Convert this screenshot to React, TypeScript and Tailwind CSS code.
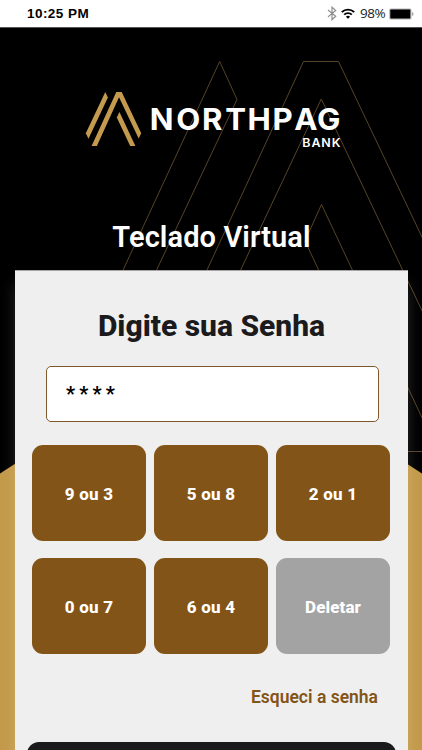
const keys = ["9 ou 3", "5 ou 8", "2 ou 1", "0 ou 7", "6 ou 4"];

function StatusBar() {
    return (
        <header className="flex h-[27px] items-center justify-between bg-white pl-[27px] pr-[8px]">
            <span className="pt-px font-['Liberation_Sans',sans-serif] text-[13.500px] font-bold tracking-[0.450px] text-black">
                10:25 PM
            </span>
            <div className="flex items-center">
                <svg className="h-[15px] w-[10px]" viewBox="0 0 10 15" fill="none" stroke="#8c8c8c" strokeWidth="1.200">
                    <path d="M1 4 8.7 10.3 5 13.7V1.2L8.7 4.4 1 10.9" />
                </svg>
                <svg className="ml-[4px] h-[11px] w-[14px]" viewBox="0 0 14 11" fill="none" stroke="#000" strokeWidth="1.9">
                    <path d="M.8 4.2a8.8 8.8 0 0 1 12.4 0" />
                    <path d="M3.2 6.7a5.4 5.4 0 0 1 7.6 0" />
                    <path d="M7 10.8 4.9 8.7a3 3 0 0 1 4.2 0z" fill="#000" stroke="none" />
                </svg>
                <span className="ml-[5px] w-[27px] font-['Open_Sans',sans-serif] text-[13.500px] leading-none tracking-[-0.500px] text-[#222]">
                    98%
                </span>
                <svg className="ml-[2px] h-[12px] w-[25px]" viewBox="0 0 25 12">
                    <rect x=".2" y=".5" width="22.3" height="11" rx="1.5" fill="#b5b5b5" />
                    <rect x="1.3" y="1.5" width="20" height="9" rx=".7" fill="#000" />
                    <path d="M23.100 4v4q1.400-.5 1.400-2t-1.400-2z" fill="#999" />
                </svg>
            </div>
        </header>
    );
}

function Backdrop() {
    return (
        <svg className="absolute inset-0 h-full w-full" viewBox="0 27.500 422 722">
            <circle cx="211" cy="783" r="375" fill="#c39a4a" />
            <g fill="none" stroke="#5f4c2c" strokeWidth="0.9">
                <path d="M39 451 219.7 61 237 99 71 451z" />
                <path d="M123 451 303.5 61h35L524 451h-35L321.3 98.500 155 451z" />
                <path d="M321.500 204 305 240.500 404 451h34z" />
            </g>
        </svg>
    );
}

function Logo() {
    return (
        <svg className="mx-auto block h-[60px] w-[262px]" viewBox="82 90 262 60">
            <g fill="#c39a4e">
                <path d="M105.300 92 107.900 97.600 88.500 138.700 85.800 133.200z" />
                <path d="M116.300 92h5.400L141.200 133.300l-2.500 5.300L119 97.300 96.900 146H91.600z" />
                <path d="M119.500 112 135.400 146h-5.200L116.800 117.500z" />
            </g>
            <g fill="#fff" fontFamily="Inter, sans-serif">
                <text
                    transform="scale(1.04 1)"
                    x="144 169.500 194.300 216.600 238 262 283 304.800"
                    y="129.600"
                    fontSize="30"
                    fontWeight="700"
                >
                    NORTHPAG
                </text>
                <text x="302.300" y="146.500" fontSize="11.500" fontWeight="600" textLength="39" lengthAdjust="spacingAndGlyphs" letterSpacing=".8">
                    BANK
                </text>
            </g>
        </svg>
    );
}

export default function App() {
    return (
        <div className="flex h-[750px] w-[422px] flex-col overflow-hidden bg-black font-['Roboto',sans-serif]">
            <StatusBar />

            <main className="relative min-h-0 flex-1 overflow-hidden border-t border-[#555]">
                <Backdrop />

                <div className="relative pl-[4px] pt-[62px]">
                    <Logo />
                </div>
                <h1 className="relative mt-[69px] pl-px text-center text-[29px] font-semibold leading-[36px] tracking-[0.100px] text-white">
                    Teclado Virtual
                </h1>

                {/* Password card */}
                <section className="relative ml-[15px] mt-[15px] h-[520px] w-[393px] border-t border-[#a5a5a5] bg-[#efefef] pt-[35px] shadow-[0_14px_14px_rgba(255,255,255,0.15)]">
                    <h2 className="text-center text-[30px] font-extrabold leading-[40px] text-[#1b1a1c]">
                        Digite sua Senha
                    </h2>
                    <div className="ml-[31px] mt-[19.500px] flex h-[56px] w-[333px] items-center rounded-[5px] border border-[#80592a] bg-white pl-[19px] text-[20px] font-bold tracking-[4.200px] text-black">
                        ****
                    </div>

                    <div className="ml-[17px] mt-[23px] grid w-[358px] grid-cols-3 gap-x-[8px] gap-y-[17px]">
                        {keys.map((label) => (
                            <button
                                key={label}
                                className="h-[96px] rounded-[11px] bg-[#835417] pt-[4px] text-[17px] font-extrabold tracking-[0.200px] text-white"
                            >
                                {label}
                            </button>
                        ))}
                        <button className="h-[96px] rounded-[11px] bg-[#a3a3a3] pt-[4px] text-[17px] font-extrabold tracking-[0.100px] text-white">
                            Deletar
                        </button>
                    </div>

                    <a className="mr-[30px] mt-[31px] block text-right text-[17.500px] font-semibold leading-[24px] text-[#835417]">
                        Esqueci a senha
                    </a>
                    <div className="ml-[12px] mt-[33px] h-[50px] w-[369px] rounded-[12px] bg-[#1b1a1c]" />
                </section>
            </main>
        </div>
    );
}
